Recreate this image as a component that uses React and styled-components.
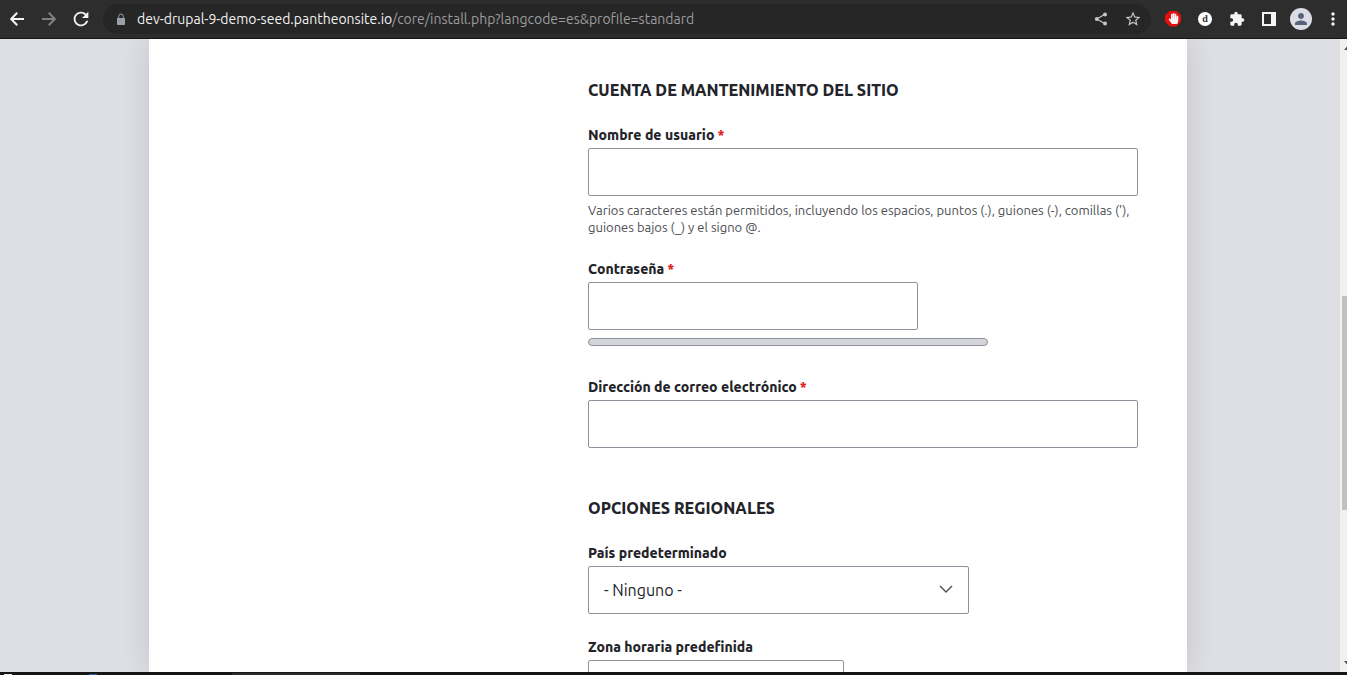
import React from "react";
import styled, { createGlobalStyle } from "styled-components";
import {
	MdExtension,
	MdMoreVert,
	MdPerson,
	MdRefresh,
	MdStarBorder,
} from "react-icons/md";
import { FaHandPaper } from "react-icons/fa";

function Browser() {
	return (
		<Toolbar>
			<NavButtons>
				<IconButton aria-label='Atrás'>
					<NavArrow viewBox='0 0 14 14'>
						<path d='M14 7H1.5M7.2 .8L1.2 7l6 6.2' />
					</NavArrow>
				</IconButton>
				<IconButton aria-label='Adelante' $color='#7f8082'>
					<NavArrow viewBox='0 0 14 14'>
						<path d='M0 7h12.5M6.8 .8l6 6.2-6 6.2' />
					</NavArrow>
				</IconButton>
				<IconButton aria-label='Recargar'>
					<MdRefresh size={22} />
				</IconButton>
			</NavButtons>

			<AddressBar>
				<IconButton aria-label='Información del sitio' $color='#9aa0a6' $size={20}>
					<svg width='8' height='12' viewBox='0 0 8 12'>
						<path fill='currentColor' d='M0 5h8v6.2a.8.8 0 0 1-.8.8H.8a.8.8 0 0 1-.8-.8z' />
						<path fill='none' stroke='currentColor' d='M1.7 5V3.3a2.3 2.3 0 0 1 4.6 0V5' />
					</svg>
				</IconButton>
				<Address>
					<Host>dev-drupal-9-demo-seed.pantheonsite.io</Host>
					/core/install.php?langcode=es&amp;profile=standard
				</Address>
				<IconButton aria-label='Compartir' $color='#c4c5c8'>
					<svg width='14' height='14' viewBox='0 0 14 14'>
						<path fill='none' stroke='currentColor' strokeWidth='1.2' d='M11 2.3L2.8 7l8.2 4.7' />
						<g fill='currentColor'>
							<circle cx='11' cy='2.4' r='2' />
							<circle cx='2.8' cy='7' r='2' />
							<circle cx='11' cy='11.6' r='2' />
						</g>
					</svg>
				</IconButton>
				<IconButton aria-label='Marcador' $color='#c4c5c8'>
					<MdStarBorder size={18} />
				</IconButton>
			</AddressBar>

			<Extensions>
				<IconButton aria-label='Bloqueador'>
					<Blocker>
						<FaHandPaper size={11} />
					</Blocker>
				</IconButton>
				<IconButton aria-label='Extensión d'>
					<LetterBadge>d</LetterBadge>
				</IconButton>
				<IconButton aria-label='Extensiones'>
					<MdExtension size={16} />
				</IconButton>
				<IconButton aria-label='Panel lateral'>
					<svg width='14' height='14' viewBox='0 0 14 14'>
						<path fill='currentColor' fillRule='evenodd' d='M0 0h14v14H0zM2 2v10h7V2z' />
					</svg>
				</IconButton>
				<IconButton aria-label='Perfil'>
					<Avatar>
						<MdPerson size={18} />
					</Avatar>
				</IconButton>
				<IconButton aria-label='Menú'>
					<MdMoreVert size={20} />
				</IconButton>
			</Extensions>
		</Toolbar>
	);
}

function App() {
	return (
		<Screen>
			<GlobalStyle />
			<Browser />

			<Viewport>
				<Backdrop>
					<Card>
						<Section>
							<Title>CUENTA DE MANTENIMIENTO DEL SITIO</Title>
							<Field>
								<Label htmlFor='name'>
									Nombre de usuario<Required>*</Required>
								</Label>
								<TextInput id='name' type='text' />
								<Description>
									Varios caracteres están permitidos, incluyendo los espacios, puntos (.), guiones (-),
									comillas ('), guiones bajos (_) y el signo @.
								</Description>
							</Field>
							<Field $after={32}>
								<Label htmlFor='pass'>
									Contraseña<Required>*</Required>
								</Label>
								<TextInput id='pass' type='password' $width={330} />
								<Strength />
							</Field>
							<Field>
								<Label htmlFor='mail'>
									Dirección de correo electrónico<Required>*</Required>
								</Label>
								<TextInput id='mail' type='email' />
							</Field>
						</Section>

						<Section>
							<Title>OPCIONES REGIONALES</Title>
							<Field>
								<Label htmlFor='country'>País predeterminado</Label>
								<SelectWrap $width={381}>
									<Select id='country'>
										<option>- Ninguno -</option>
									</Select>
									<Chevron viewBox='0 0 14 9'>
										<path d='M1 1l6 6 6-6' />
									</Chevron>
								</SelectWrap>
							</Field>
							<Field>
								<Label htmlFor='timezone'>Zona horaria predefinida</Label>
								<SelectWrap $width={256}>
									<Select id='timezone' />
								</SelectWrap>
							</Field>
						</Section>
					</Card>
				</Backdrop>

				<Scrollbar>
					<Arrow viewBox='0 0 7 4'>
						<path d='M0 4l3.5-4L7 4z' />
					</Arrow>
					<Track>
						<Thumb />
					</Track>
					<Arrow viewBox='0 0 7 4'>
						<path d='M0 0l3.5 4L7 0z' />
					</Arrow>
				</Scrollbar>
			</Viewport>

			<Taskbar>
				<TaskIcon $color='#e8e4e4' />
				<TaskIcon $color='#2a62c4' />
				<TaskWindow />
			</Taskbar>
		</Screen>
	);
}

export default App;

const GlobalStyle = createGlobalStyle`
	* {
		box-sizing: border-box;
	}

	body {
		margin: 0;
		overflow: hidden;
		font-family: Ubuntu, "Noto Sans", "Open Sans", sans-serif;
		color: #232429;
	}

	button, input, select {
		font-family: inherit;
	}
`;

const Screen = styled.div`
	height: 100vh;
	display: flex;
	flex-direction: column;
	overflow: hidden;
`;

const Toolbar = styled.header`
	flex: none;
	height: 39px;
	display: flex;
	align-items: center;
	padding-bottom: 1px;
	background: #2d2d2d;
	border-bottom: 1px solid #151515;
`;

const NavButtons = styled.div`
	display: flex;
	padding: 0 6px 0 1px;
`;

const NavArrow = styled.svg`
	width: 14px;
	height: 14px;
	fill: none;
	stroke: currentColor;
	stroke-width: 2;
`;

const IconButton = styled.button`
	width: ${(p) => p.$size || 32}px;
	height: 28px;
	display: flex;
	align-items: center;
	justify-content: center;
	padding: 0;
	border: 0;
	background: none;
	color: ${(p) => p.$color || "#f4f4f5"};
`;

const AddressBar = styled.div`
	flex: 1;
	min-width: 0;
	height: 30px;
	display: flex;
	align-items: center;
	padding: 0 2px 0 8px;
	border-radius: 15px;
	background: #262626;
`;

const Address = styled.div`
	flex: 1;
	min-width: 0;
	padding-left: 6px;
	overflow: hidden;
	white-space: nowrap;
	font-size: 14px;
	line-height: 20px;
	color: #9b9c9e;
`;

const Host = styled.span`
	color: #f1f1f2;
`;

const Extensions = styled.div`
	display: flex;
	padding-left: 6px;
	margin-right: -2px;
`;

const Blocker = styled.span`
	width: 16px;
	height: 16px;
	display: flex;
	align-items: center;
	justify-content: center;
	background: #e50d0d;
	clip-path: polygon(30% 0, 70% 0, 100% 30%, 100% 70%, 70% 100%, 30% 100%, 0 70%, 0 30%);
`;

const LetterBadge = styled.span`
	width: 14px;
	height: 14px;
	border-radius: 50%;
	background: #fff;
	color: #333;
	font: bold 10px/13px "Liberation Serif", serif;
`;

const Avatar = styled.span`
	width: 22px;
	height: 22px;
	display: flex;
	align-items: center;
	justify-content: center;
	border-radius: 50%;
	background: #dadde3;
	color: #56617a;
`;

const Viewport = styled.div`
	flex: 1;
	min-height: 0;
	display: flex;
	overflow: hidden;
`;

const Backdrop = styled.main`
	flex: 1;
	min-width: 0;
	display: flex;
	padding: 0 153px 0 149px;
	overflow: hidden;
	background: #dedfe4;
`;

const Card = styled.form`
	flex: 1;
	min-width: 0;
	padding: 39px 49px 0 439px;
	background: #fff;
	box-shadow: 0 0 28px rgba(0, 0, 0, 0.12);
`;

const Section = styled.section`
	margin-bottom: 48px;
`;

const Title = styled.h2`
	margin: 0 0 24px;
	font-size: 16px;
	line-height: 24px;
	font-weight: 800;
`;

const Field = styled.div`
	margin-bottom: ${(p) => p.$after || 24}px;

	&:last-child {
		margin-bottom: 0;
	}
`;

const Label = styled.label`
	display: block;
	margin-bottom: 4px;
	font-size: 14px;
	line-height: 18px;
	font-weight: 800;
`;

const Required = styled.span`
	margin-left: 3px;
	color: #dc2323;
`;

const TextInput = styled.input`
	display: block;
	width: ${(p) => (p.$width ? `${p.$width}px` : "100%")};
	max-width: 100%;
	height: 48px;
	padding: 0 15px;
	border: 1px solid #8e929c;
	border-radius: 2px;
	background: #fff;
	font-size: 16px;
`;

const Description = styled.p`
	margin: 6px 0 0;
	font-size: 13px;
	line-height: 17px;
	color: #4c4d52;
`;

const Strength = styled.div`
	max-width: 400px;
	height: 8px;
	margin-top: 8px;
	border: 1px solid #8e929c;
	border-radius: 4px;
	background: #d3d4d9;
`;

const SelectWrap = styled.div`
	position: relative;
	width: ${(p) => p.$width}px;
	max-width: 100%;
`;

const Select = styled.select`
	appearance: none;
	display: block;
	width: 100%;
	height: 48px;
	padding: 0 40px 0 15px;
	border: 1px solid #8e929c;
	border-radius: 2px;
	background: #fff;
	color: #232429;
	font-size: 16px;
`;

const Chevron = styled.svg`
	position: absolute;
	top: 19px;
	right: 16px;
	width: 14px;
	height: 9px;
	fill: none;
	stroke: #55565b;
	stroke-width: 1.5;
	pointer-events: none;
`;

/* the outer half runs past the window edge */
const Scrollbar = styled.div`
	flex: none;
	width: 15px;
	margin-right: -8px;
	display: flex;
	flex-direction: column;
	align-items: center;
	padding: 7px 0;
	background: #f1f1f1;
`;

const Arrow = styled.svg`
	flex: none;
	width: 7px;
	height: 4px;
	fill: #505050;
`;

const Track = styled.div`
	flex: 1;
	width: 11px;
	display: grid;
	grid-template-rows: 246fr 214fr 151fr;
`;

const Thumb = styled.div`
	grid-row: 2;
	background: #c1c1c1;
`;

const Taskbar = styled.footer`
	flex: none;
	height: 3px;
	display: flex;
	align-items: flex-end;
	background: #161616;
`;

const TaskIcon = styled.span`
	width: 8px;
	height: 1px;
	margin: 0 73px 0 4px;
	background: ${(p) => p.$color};
`;

const TaskWindow = styled.span`
	width: 128px;
	height: 2px;
	margin-left: 62px;
	background: #2f2b2b;
`;
